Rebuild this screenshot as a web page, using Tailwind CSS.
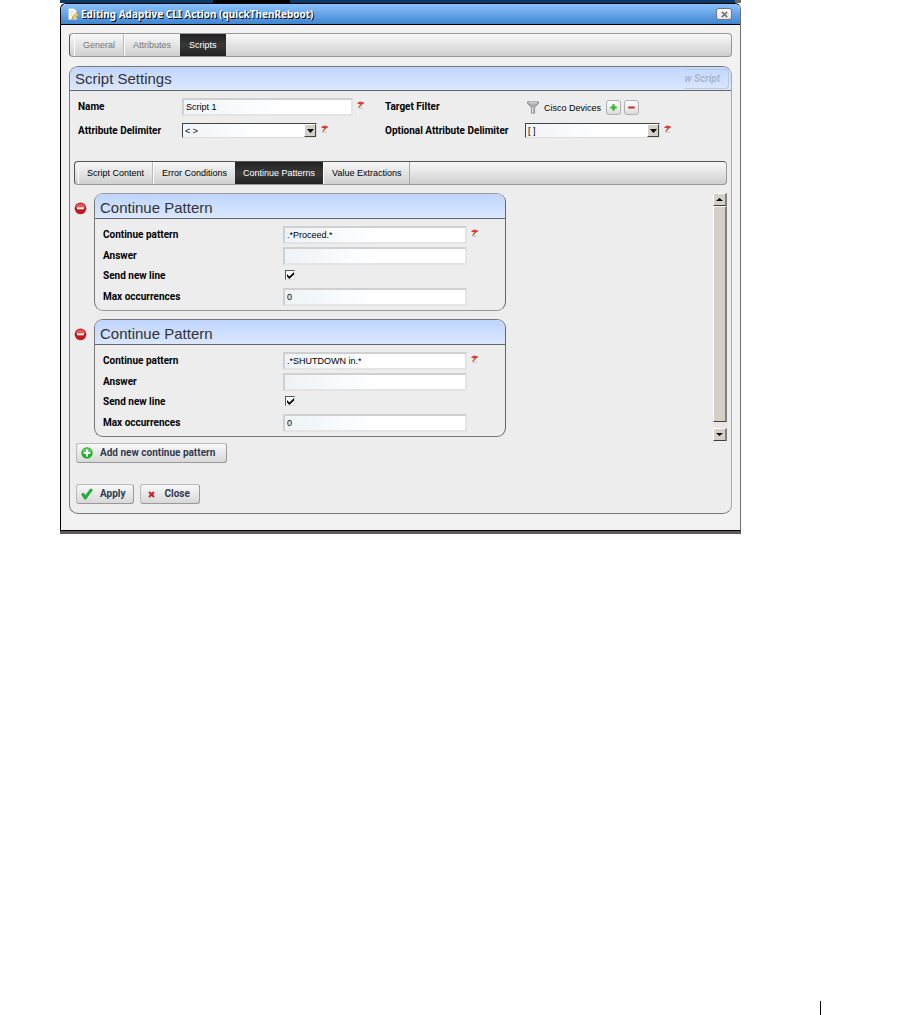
<!doctype html>
<html lang="en">
<head>
  <meta charset="UTF-8">
  <meta name="viewport" content="width=device-width, initial-scale=1.0">
  <title>Editing Adaptive CLI Action (quickThenReboot)</title>
  <script src="https://cdn.jsdelivr.net/npm/@tailwindcss/browser@4"></script>
</head>
<body class="bg-white font-['Liberation_Sans',sans-serif] text-[9px] leading-3 text-black">
  <!-- shared icons -->
  <svg class="hidden">
    <symbol id="required" viewBox="0 0 7 8">
      <path d="M0 2.2 3 .4 7 1.4 6.6 3 4.6 3.4 1 3z" fill="#e0393c"/>
      <path d="M4.6 3 1.6 6.6" stroke="#b5604a" stroke-width="1.4"/>
      <path d="M1.6 7.2H6" stroke="#c9c4bc" stroke-width="1"/>
    </symbol>
    <symbol id="remove" viewBox="0 0 13 13">
      <circle cx="6.5" cy="7" r="5.8" fill="#9b9b9b" opacity=".5"/>
      <circle cx="6.5" cy="6.3" r="5.8" fill="#c4161c"/>
      <path d="M1.6 5.4a5 5 0 0 1 9.8 0z" fill="#e2585a"/>
      <path d="M3 5.3h7v2H3z" fill="#fff"/>
    </symbol>
    <symbol id="check" viewBox="0 0 7 7">
      <path d="M0 2v2.6L2.4 7 7 2.6V0L2.4 4.4z" fill="#000"/>
    </symbol>
  </svg>

  <div class="flex min-h-screen flex-col">
    <div class="ml-[60px] mr-[159px]">
      <!-- page behind the dialog -->
      <div class="flex h-[3px] bg-[#0b3a66]">
        <div class="ml-[153px] w-[77px] bg-black"></div>
        <div class="ml-auto w-[6px] bg-[#6a6a6a]"></div>
      </div>

      <div class="border-b-[3px] border-[#5c5a5a]">
        <section class="rounded-t-md border border-black border-r-[#6e6e6e] bg-[#f2f2f2]">
          <!-- title bar -->
          <header class="flex h-[21px] items-center rounded-t-md border-b border-black bg-linear-to-b from-[#8cc2fb] to-[#3f86d2] pr-2 pl-[6px]">
            <svg class="size-3 shrink-0" viewBox="0 0 12 12">
              <path d="M1.5.5h5.5l2.5 2.5v8.5h-8z" fill="#fff" stroke="#b9c2ca" stroke-width=".8"/>
              <path d="M3 3.5h4M3 5.5h4M3 7.5h2" stroke="#c9d5e0" stroke-width=".8"/>
              <path d="M5.6 8.2 9.8 4.8l1.7 2L7.4 10.4l-2.6.6z" fill="#f3cd55" stroke="#a8852f" stroke-width=".6"/>
            </svg>
            <h1 class="ml-[2px] flex-1 font-['Noto_Sans',sans-serif] text-[10px] font-bold text-white [text-shadow:1px_1px_0_#000]">Editing Adaptive CLI Action (quickThenReboot)</h1>
            <button type="button" aria-label="Close window" class="flex h-3 w-4 items-center justify-center rounded-[3px] border border-[#777] bg-linear-to-b from-white to-[#e6e6e6]">
              <svg class="size-[7px]" viewBox="0 0 7 7"><path d="M.8.8l5.4 5.4M6.2.8.8 6.2" stroke="#777" stroke-width="1.7"/></svg>
            </button>
          </header>

          <div class="px-2 pt-2 pb-4">
            <!-- main tabs -->
            <nav class="flex h-6 rounded-[4px] border border-[#999] border-l-[#555] bg-linear-to-b from-[#f8f8f8] to-[#d0d0d0] pl-1 text-[#777]">
              <a href="#" class="flex items-center border-x border-l-white border-r-[#bbb] px-2">General</a>
              <a href="#" class="flex items-center border-l border-white pr-[9px] pl-2">Attributes</a>
              <a href="#" class="flex items-center bg-linear-to-b from-[#222] via-[#383838] to-[#222] px-[9px] text-white">Scripts</a>
            </nav>

            <section class="mt-[9px] rounded-[9px] border border-[#777] border-r-[#aaa] bg-[#ededed]">
              <div class="flex h-6 items-center justify-between rounded-t-lg border-b border-[#666] bg-linear-to-b from-[#c1d6ff] to-[#dbe7ff] pr-[2px] pl-[5px]">
                <h2 class="text-[15px] leading-5 text-[#333]">Script Settings</h2>
                <button type="button" disabled class="h-5 rounded-r-[4px] border border-l-0 border-[#b9c8e4] pr-2 font-['Roboto',sans-serif] text-[10px] font-bold text-[#a9b6cd] italic">w Script</button>
              </div>

              <div class="px-1 pt-1 pb-[9px]">
                <div class="grid grid-cols-[104px_203px_140px_1fr] items-center pl-1">
                  <label for="name" class="font-['Roboto',sans-serif] text-[10px] font-bold">Name</label>
                  <div class="flex h-6 items-center gap-1">
                    <input id="name" type="text" value="Script 1" class="h-[18px] w-[171px] border-2 border-[#e4e4e4] border-t-[#d0d0d0] border-l-[#d0d0d0] bg-linear-to-r from-[#f0f5f9] to-white to-60% px-[2px]">
                    <svg class="mb-1 h-2 w-[7px]"><use href="#required"/></svg>
                  </div>
                  <span class="font-['Roboto',sans-serif] text-[10px] font-bold">Target Filter</span>
                  <div class="flex h-6 items-center gap-[3px] pt-px">
                    <svg class="ml-[2px] h-[13px] w-3" viewBox="0 0 12 13">
                      <path d="M.5.8h11v1.6L7.6 6.6v5.6H4.4V6.6L.5 2.4z" fill="#a9a9ae" stroke="#85858b" stroke-width=".7"/>
                      <path d="M2 1.8h8" stroke="#e4e4e8"/>
                      <path d="M5.6 6.5v5.4" stroke="#e8e8ea"/>
                    </svg>
                    <span class="pl-[2px]">Cisco Devices</span>
                    <button type="button" aria-label="Add filter" class="ml-[2px] flex size-[15px] items-center justify-center rounded-[3px] border border-[#b0b0b0] bg-linear-to-b from-white to-[#dcdcdc]">
                      <svg class="size-[7px]" viewBox="0 0 7 7"><path d="M3.5.3v6.4M.3 3.5h6.4" stroke="#2bb62f" stroke-width="2.2"/></svg>
                    </button>
                    <button type="button" aria-label="Remove filter" class="flex size-[15px] items-center justify-center rounded-[3px] border border-[#b0b0b0] bg-linear-to-b from-white to-[#dcdcdc]">
                      <svg class="size-[7px]" viewBox="0 0 7 7"><path d="M.3 3.5h6.4" stroke="#c9282d" stroke-width="2"/></svg>
                    </button>
                  </div>

                  <label for="delimiter" class="font-['Roboto',sans-serif] text-[10px] font-bold">Attribute Delimiter</label>
                  <div class="flex h-[23px] items-center gap-1">
                    <div class="relative">
                      <select id="delimiter" class="block h-[15px] w-[135px] appearance-none border border-[#ddd] border-t-[#444] border-l-[#444] bg-linear-to-r from-[#f0f5f9] to-white to-60% pl-[2px] leading-3">
                        <option>&lt; &gt;</option>
                      </select>
                      <span class="pointer-events-none absolute top-px right-px flex h-[13px] w-3 items-center justify-center border border-[#444] border-t-white border-l-white bg-[#d4d0c8]">
                        <svg class="h-1 w-[7px]" viewBox="0 0 7 4"><path d="M0 0h7L3.5 4z"/></svg>
                      </span>
                    </div>
                    <svg class="mb-1 h-2 w-[7px]"><use href="#required"/></svg>
                  </div>
                  <label for="optional" class="font-['Roboto',sans-serif] text-[10px] font-bold whitespace-nowrap">Optional Attribute Delimiter</label>
                  <div class="flex h-[23px] items-center gap-1">
                    <div class="relative">
                      <select id="optional" class="block h-[15px] w-[135px] appearance-none border border-[#ddd] border-t-[#444] border-l-[#444] bg-linear-to-r from-[#f0f5f9] to-white to-60% pl-[2px] leading-3">
                        <option>[ ]</option>
                      </select>
                      <span class="pointer-events-none absolute top-px right-px flex h-[13px] w-3 items-center justify-center border border-[#444] border-t-white border-l-white bg-[#d4d0c8]">
                        <svg class="h-1 w-[7px]" viewBox="0 0 7 4"><path d="M0 0h7L3.5 4z"/></svg>
                      </span>
                    </div>
                    <svg class="mb-1 h-2 w-[7px]"><use href="#required"/></svg>
                  </div>
                </div>

                <!-- script tabs -->
                <nav class="mt-[19px] flex h-6 rounded-[4px] border border-[#999] border-t-[#555] border-l-[#555] bg-linear-to-b from-[#f8f8f8] to-[#d0d0d0] pl-[3px]">
                  <a href="#" class="flex items-center border-x border-l-white border-r-[#bbb] px-2">Script Content</a>
                  <a href="#" class="flex items-center border-l border-white px-2">Error Conditions</a>
                  <a href="#" class="flex items-center bg-linear-to-b from-[#222] via-[#383838] to-[#222] px-2 text-white">Continue Patterns</a>
                  <a href="#" class="flex items-center border-x border-l-white border-r-[#aaa] px-2">Value Extractions</a>
                </nav>

                <div class="mt-2 flex justify-between">
                  <div class="flex flex-col gap-2">
                    <div class="flex items-start gap-[7px]">
                      <button type="button" aria-label="Remove pattern" class="mt-[9px]"><svg class="size-[13px]"><use href="#remove"/></svg></button>
                      <fieldset class="w-[412px] rounded-[9px] border border-[#999] border-r-[#666] border-l-[#777]">
                        <h3 class="h-[25px] rounded-t-lg border-b border-[#666] bg-linear-to-b from-[#bfd5ff] to-[#dbe7ff] pl-[5px] text-[15px] leading-[27px] text-[#333]">Continue Pattern</h3>
                        <div class="grid grid-cols-[180px_1fr] pt-[5px] pb-[3px] pl-2">
                          <label for="pattern1" class="self-center font-['Roboto',sans-serif] text-[10px] font-bold">Continue pattern</label>
                          <div class="flex h-[21px] items-center gap-1">
                            <input id="pattern1" type="text" value=".*Proceed.*" class="h-[18px] w-[184px] border-2 border-[#e4e4e4] border-t-[#d0d0d0] border-l-[#d0d0d0] bg-linear-to-r from-[#eef3f7] to-white to-50% px-[2px]">
                            <svg class="mb-1 h-2 w-[7px]"><use href="#required"/></svg>
                          </div>
                          <label for="answer1" class="self-center font-['Roboto',sans-serif] text-[10px] font-bold">Answer</label>
                          <div class="flex h-[21px] items-center">
                            <input id="answer1" type="text" class="h-[18px] w-[184px] border-2 border-[#e4e4e4] border-t-[#d0d0d0] border-l-[#d0d0d0] bg-linear-to-r from-[#eef3f7] to-white to-50% px-[2px]">
                          </div>
                          <label for="newline1" class="self-center font-['Roboto',sans-serif] text-[10px] font-bold">Send new line</label>
                          <div class="flex h-[20px] items-center pb-[2px] pl-[2px]">
                            <span class="relative flex">
                              <input id="newline1" type="checkbox" checked class="peer size-[10px] appearance-none border border-[#ddd] border-t-[#555] border-l-[#555] bg-white">
                              <svg class="pointer-events-none absolute top-[2px] left-[2px] hidden size-[7px] peer-checked:block"><use href="#check"/></svg>
                            </span>
                          </div>
                          <label for="max1" class="self-center font-['Roboto',sans-serif] text-[10px] font-bold">Max occurrences</label>
                          <div class="flex h-[21px] items-center">
                            <input id="max1" type="text" value="0" class="h-[18px] w-[184px] border-2 border-[#e4e4e4] border-t-[#d0d0d0] border-l-[#d0d0d0] bg-linear-to-r from-[#eef3f7] to-white to-50% px-[2px]">
                          </div>
                        </div>
                      </fieldset>
                    </div>

                    <div class="flex items-start gap-[7px]">
                      <button type="button" aria-label="Remove pattern" class="mt-[9px]"><svg class="size-[13px]"><use href="#remove"/></svg></button>
                      <fieldset class="w-[412px] rounded-[9px] border border-[#777] border-r-[#666] border-l-[#777]">
                        <h3 class="h-[25px] rounded-t-lg border-b border-[#666] bg-linear-to-b from-[#bfd5ff] to-[#dbe7ff] pl-[5px] text-[15px] leading-[27px] text-[#333]">Continue Pattern</h3>
                        <div class="grid grid-cols-[180px_1fr] pt-[5px] pb-[3px] pl-2">
                          <label for="pattern2" class="self-center font-['Roboto',sans-serif] text-[10px] font-bold">Continue pattern</label>
                          <div class="flex h-[21px] items-center gap-1">
                            <input id="pattern2" type="text" value=".*SHUTDOWN in.*" class="h-[18px] w-[184px] border-2 border-[#e4e4e4] border-t-[#d0d0d0] border-l-[#d0d0d0] bg-linear-to-r from-[#eef3f7] to-white to-50% px-[2px]">
                            <svg class="mb-1 h-2 w-[7px]"><use href="#required"/></svg>
                          </div>
                          <label for="answer2" class="self-center font-['Roboto',sans-serif] text-[10px] font-bold">Answer</label>
                          <div class="flex h-[21px] items-center">
                            <input id="answer2" type="text" class="h-[18px] w-[184px] border-2 border-[#e4e4e4] border-t-[#d0d0d0] border-l-[#d0d0d0] bg-linear-to-r from-[#eef3f7] to-white to-50% px-[2px]">
                          </div>
                          <label for="newline2" class="self-center font-['Roboto',sans-serif] text-[10px] font-bold">Send new line</label>
                          <div class="flex h-[20px] items-center pb-[2px] pl-[2px]">
                            <span class="relative flex">
                              <input id="newline2" type="checkbox" checked class="peer size-[10px] appearance-none border border-[#ddd] border-t-[#555] border-l-[#555] bg-white">
                              <svg class="pointer-events-none absolute top-[2px] left-[2px] hidden size-[7px] peer-checked:block"><use href="#check"/></svg>
                            </span>
                          </div>
                          <label for="max2" class="self-center font-['Roboto',sans-serif] text-[10px] font-bold">Max occurrences</label>
                          <div class="flex h-[21px] items-center">
                            <input id="max2" type="text" value="0" class="h-[18px] w-[184px] border-2 border-[#e4e4e4] border-t-[#d0d0d0] border-l-[#d0d0d0] bg-linear-to-r from-[#eef3f7] to-white to-50% px-[2px]">
                          </div>
                        </div>
                      </fieldset>
                    </div>
                  </div>

                  <!-- scrollbar -->
                  <div class="-mb-1 flex w-[14px] flex-col bg-[#e9e7e3]">
                    <button type="button" aria-label="Scroll up" class="flex h-[13px] items-center justify-center border border-r-2 border-white border-r-[#808080] border-b-[#404040] bg-[#d4d0c8]">
                      <svg class="h-[3px] w-[7px]" viewBox="0 0 7 3"><path d="M0 3h7L3.5 0z"/></svg>
                    </button>
                    <div class="mb-[6px] flex-1 border border-r-2 border-white border-r-[#808080] border-b-[#404040] bg-[#d4d0c8]"></div>
                    <button type="button" aria-label="Scroll down" class="flex h-[13px] items-center justify-center border border-r-2 border-white border-r-[#808080] border-b-[#404040] bg-[#d4d0c8]">
                      <svg class="h-[3px] w-[7px]" viewBox="0 0 7 3"><path d="M0 0h7L3.5 3z"/></svg>
                    </button>
                  </div>
                </div>

                <!-- actions -->
                <div class="mt-[6px] pl-[2px] font-['Roboto',sans-serif] text-[10px] font-bold text-[#2f3b52]">
                  <button type="button" class="flex h-5 items-center gap-[7px] rounded-[3px] border border-[#bbb] border-r-[#999] border-b-[#999] bg-linear-to-b from-[#f8f8f8] to-[#d8d8d8] pr-[11px] pl-1">
                    <svg class="size-3" viewBox="0 0 12 12">
                      <circle cx="6" cy="6" r="5.7" fill="#1fae2b"/>
                      <path d="M1.3 5a4.8 4.8 0 0 1 9.4 0z" fill="#5fcf5f"/>
                      <path d="M6 2.6v6.8M2.6 6h6.8" stroke="#fff" stroke-width="2"/>
                    </svg>
                    Add new continue pattern
                  </button>
                  <div class="mt-[21px] flex gap-[6px]">
                    <button type="button" class="flex h-5 items-center gap-[7px] rounded-[3px] border border-[#bbb] border-r-[#999] border-b-[#999] bg-linear-to-b from-[#f8f8f8] to-[#d8d8d8] pr-[7px] pl-1">
                      <svg class="size-3" viewBox="0 0 12 12"><path d="M.4 6.2 2.4 5l2 2.4L9.6.8l2 1L5 11.2H3.6z" fill="#22b135" stroke="#15922a" stroke-width=".5"/></svg>
                      Apply
                    </button>
                    <button type="button" class="flex h-5 items-center gap-[10px] rounded-[3px] border border-[#bbb] border-r-[#999] border-b-[#999] bg-linear-to-b from-[#f8f8f8] to-[#d8d8d8] pr-[9px] pl-[7px]">
                      <svg class="size-[7px]" viewBox="0 0 7 7"><path d="M1 1l5 5M6 1 1 6" stroke="#cb2027" stroke-width="2"/></svg>
                      Close
                    </button>
                  </div>
                </div>
              </div>
            </section>
          </div>
        </section>
      </div>
    </div>

    <div class="mt-auto mr-[79px] h-[14px] w-px self-end bg-black"></div>
  </div>
</body>
</html>
